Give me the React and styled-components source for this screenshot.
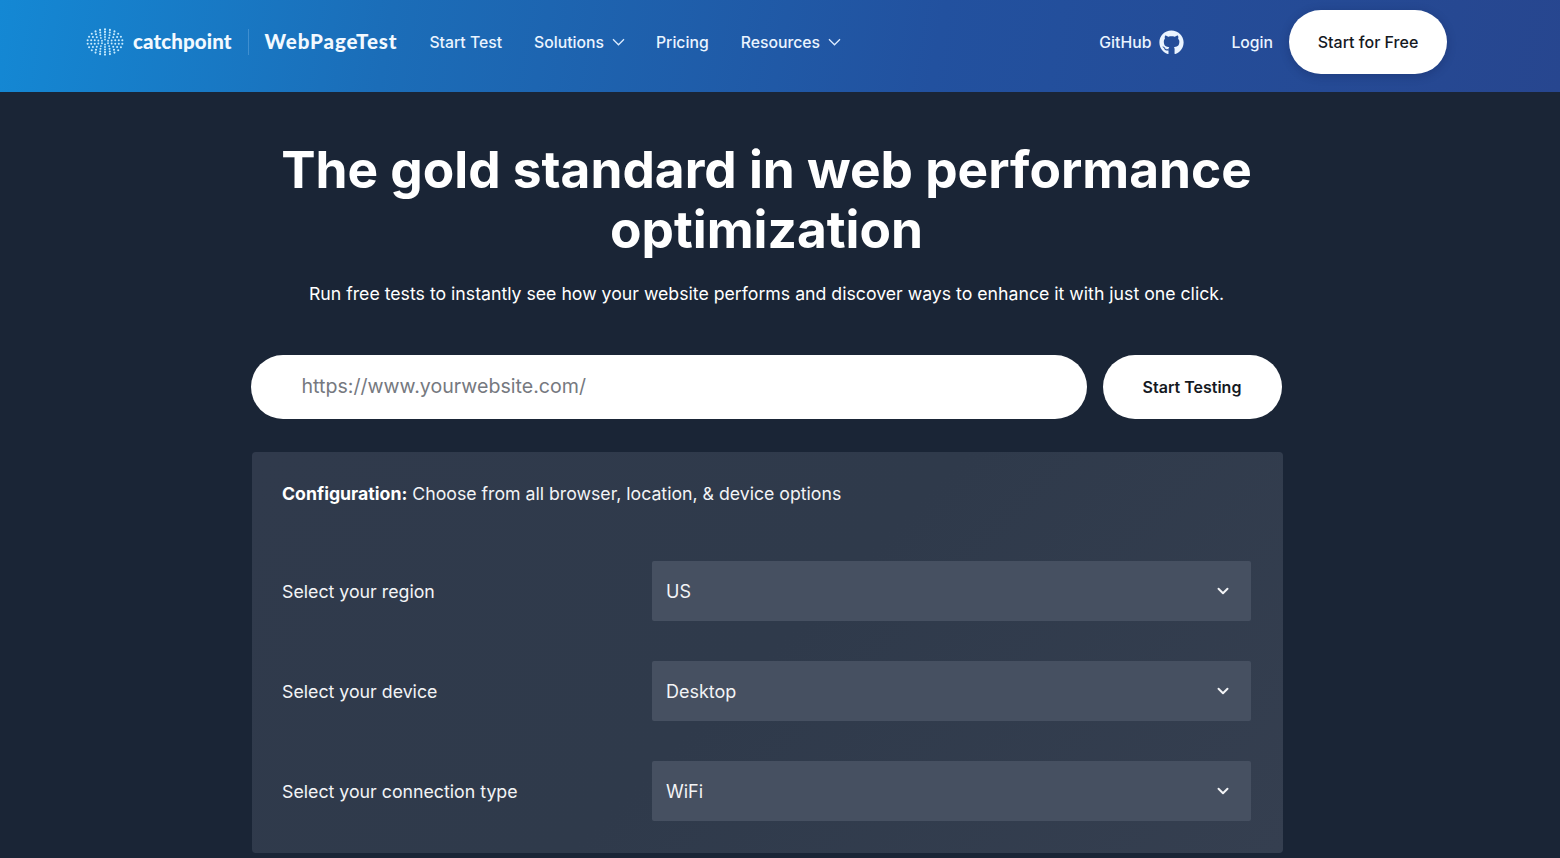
import React from 'react';
import styled, { createGlobalStyle } from 'styled-components';
import { FaGithub } from 'react-icons/fa';
import { FiChevronDown } from 'react-icons/fi';

const GlobalStyle = createGlobalStyle`
  html, body {
    margin: 0;
    padding: 0;
    height: 858px;
    overflow: hidden;
    background: #1a2536;
    font-family: Inter, "Liberation Sans", sans-serif;
  }
  * {
    box-sizing: border-box;
  }
`;

const Header = styled.header`
  height: 92px;
  display: flex;
  align-items: center;
  padding: 0 113px 8px 86px;
  background: linear-gradient(100deg, #1488d4 0%, #1b6db8 25%, #22519f 60%, #27468f 100%);
`;

const LogoWrap = styled.a`
  display: flex;
  align-items: center;
  color: #fff;
  margin-right: 32px;
`;

const CatchpointName = styled.span`
  font-family: Lato, sans-serif;
  font-weight: 900;
  font-size: 20.5px;
  margin: -2px 0 0 9px;
  letter-spacing: 0.1px;
  color: #f2f9ff;
`;

const Divider = styled.span`
  width: 1px;
  height: 26px;
  background: #3f8fd0;
  margin: 0 16px;
`;

const ProductName = styled.span`
  font-family: Lato, sans-serif;
  font-weight: 900;
  font-size: 20.5px;
  margin-top: -2px;
  letter-spacing: 0.9px;
  color: #f2f9ff;
`;

const Nav = styled.nav`
  display: flex;
  align-items: center;
  gap: 32px;
`;

const NavLink = styled.a`
  display: flex;
  align-items: center;
  gap: 8px;
  font-size: 15.75px;
  font-weight: 500;
  color: #eaf4ff;
  white-space: nowrap;
`;

const Caret = styled.svg`
  width: 13px;
  height: 8px;
  margin-right: -1px;
  fill: none;
  stroke: #dcecff;
  stroke-width: 1.3;
`;

const HeaderRight = styled.div`
  display: flex;
  align-items: center;
  margin-left: auto;
`;

const GithubLink = styled(NavLink)`
  margin-right: 47px;

  svg {
    font-size: 25px;
  }
`;

const LoginLink = styled(NavLink)`
  margin-right: 16px;
`;

const Pill = styled.button`
  border: none;
  background: #fff;
  color: #15191f;
  font-family: inherit;
  font-weight: 500;
  border-radius: 32px;
  white-space: nowrap;
`;

const StartFree = styled(Pill)`
  width: 158px;
  height: 64px;
  font-size: 16px;
  box-shadow: 0 2px 10px rgba(10, 20, 60, 0.25);
`;

const Main = styled.main`
  width: 1032px;
  margin-left: 250.5px;
  padding-top: 47px;
`;

const Title = styled.h1`
  margin: 0;
  text-align: center;
  font-size: 51.4px;
  line-height: 60px;
  font-weight: 700;
  color: #fff;
`;

const Lead = styled.p`
  margin: 21px 0 0;
  text-align: center;
  font-size: 17.7px;
  line-height: 28px;
  color: #fff;
`;

const UrlForm = styled.form`
  display: flex;
  gap: 16px;
  margin-top: 47px;
`;

const UrlInput = styled.input`
  width: 836px;
  height: 64px;
  border: none;
  outline: none;
  border-radius: 32px;
  padding: 0 51px 2px;
  background: #fff;
  font-family: inherit;
  font-size: 19.6px;

  &::placeholder {
    color: #76797f;
    opacity: 1;
  }
`;

const StartTesting = styled(Pill)`
  width: 179px;
  height: 64px;
  font-size: 16px;
  font-weight: 600;
`;

const Panel = styled.section`
  margin: 33px 0 0 1.5px;
  height: 401px;
  padding: 31px 32px 0 30px;
  border-radius: 4px;
  background: linear-gradient(135deg, #303a4c 0%, #2f3a4b 50%, #353f50 100%);
`;

const PanelIntro = styled.p`
  margin: 0 0 56px;
  font-size: 17.7px;
  line-height: 22px;
  color: #f3f4f6;

  strong {
    font-weight: 700;
    color: #fff;
  }
`;

const FieldRow = styled.label`
  display: grid;
  grid-template-columns: 370px 1fr;
  align-items: center;
  height: 60px;
  margin-bottom: 40px;
  font-size: 17.75px;
  color: #f3f4f6;
`;

const SelectBox = styled.div`
  height: 60px;
  display: flex;
  align-items: center;
  justify-content: space-between;
  padding: 0 19px 0 14px;
  background: #465061;
  border-radius: 2px;
  font-size: 18px;
  color: #f3f4f6;

  svg {
    font-size: 18px;
    stroke-width: 2.6;
  }
`;

const LogoMark = () => {
  const dots = [];
  const rings = [
    [3.5, 6, 0.9],
    [7, 10, 0.95],
    [10.5, 14, 1],
    [14, 18, 1.05],
    [17.5, 22, 1.05],
  ];
  rings.forEach(([r, count, size]) => {
    for (let i = 0; i < count; i++) {
      const a = ((i + 0.5) / count) * Math.PI * 2;
      dots.push(
        <circle key={`${r}-${i}`} cx={19 + r * Math.cos(a)} cy={14 + r * Math.sin(a) * 0.72} r={size} />
      );
    }
  });
  return (
    <svg width="38" height="28" viewBox="0 0 38 28" fill="#c9ecff">
      {dots}
    </svg>
  );
};

const Chevron = () => (
  <Caret viewBox="0 0 13 8">
    <path d="M1 1.2 L6.5 6.8 L12 1.2" />
  </Caret>
);

const Field = ({ label, value }) => (
  <FieldRow>
    {label}
    <SelectBox>
      {value}
      <FiChevronDown />
    </SelectBox>
  </FieldRow>
);

export default function App() {
  return (
    <>
      <GlobalStyle />
      <Header>
        <LogoWrap>
          <LogoMark />
          <CatchpointName>catchpoint</CatchpointName>
          <Divider />
          <ProductName>WebPageTest</ProductName>
        </LogoWrap>
        <Nav>
          <NavLink>Start Test</NavLink>
          <NavLink>
            Solutions <Chevron />
          </NavLink>
          <NavLink>Pricing</NavLink>
          <NavLink>
            Resources <Chevron />
          </NavLink>
        </Nav>
        <HeaderRight>
          <GithubLink>
            GitHub <FaGithub />
          </GithubLink>
          <LoginLink>Login</LoginLink>
          <StartFree>Start for Free</StartFree>
        </HeaderRight>
      </Header>
      <Main>
        <Title>
          The gold standard in web performance
          <br />
          optimization
        </Title>
        <Lead>Run free tests to instantly see how your website performs and discover ways to enhance it with just one click.</Lead>
        <UrlForm>
          <UrlInput placeholder="https://www.yourwebsite.com/" />
          <StartTesting type="button">Start Testing</StartTesting>
        </UrlForm>
        <Panel>
          <PanelIntro>
            <strong>Configuration:</strong> Choose from all browser, location, &amp; device options
          </PanelIntro>
          <Field label="Select your region" value="US" />
          <Field label="Select your device" value="Desktop" />
          <Field label="Select your connection type" value="WiFi" />
        </Panel>
      </Main>
    </>
  );
}
